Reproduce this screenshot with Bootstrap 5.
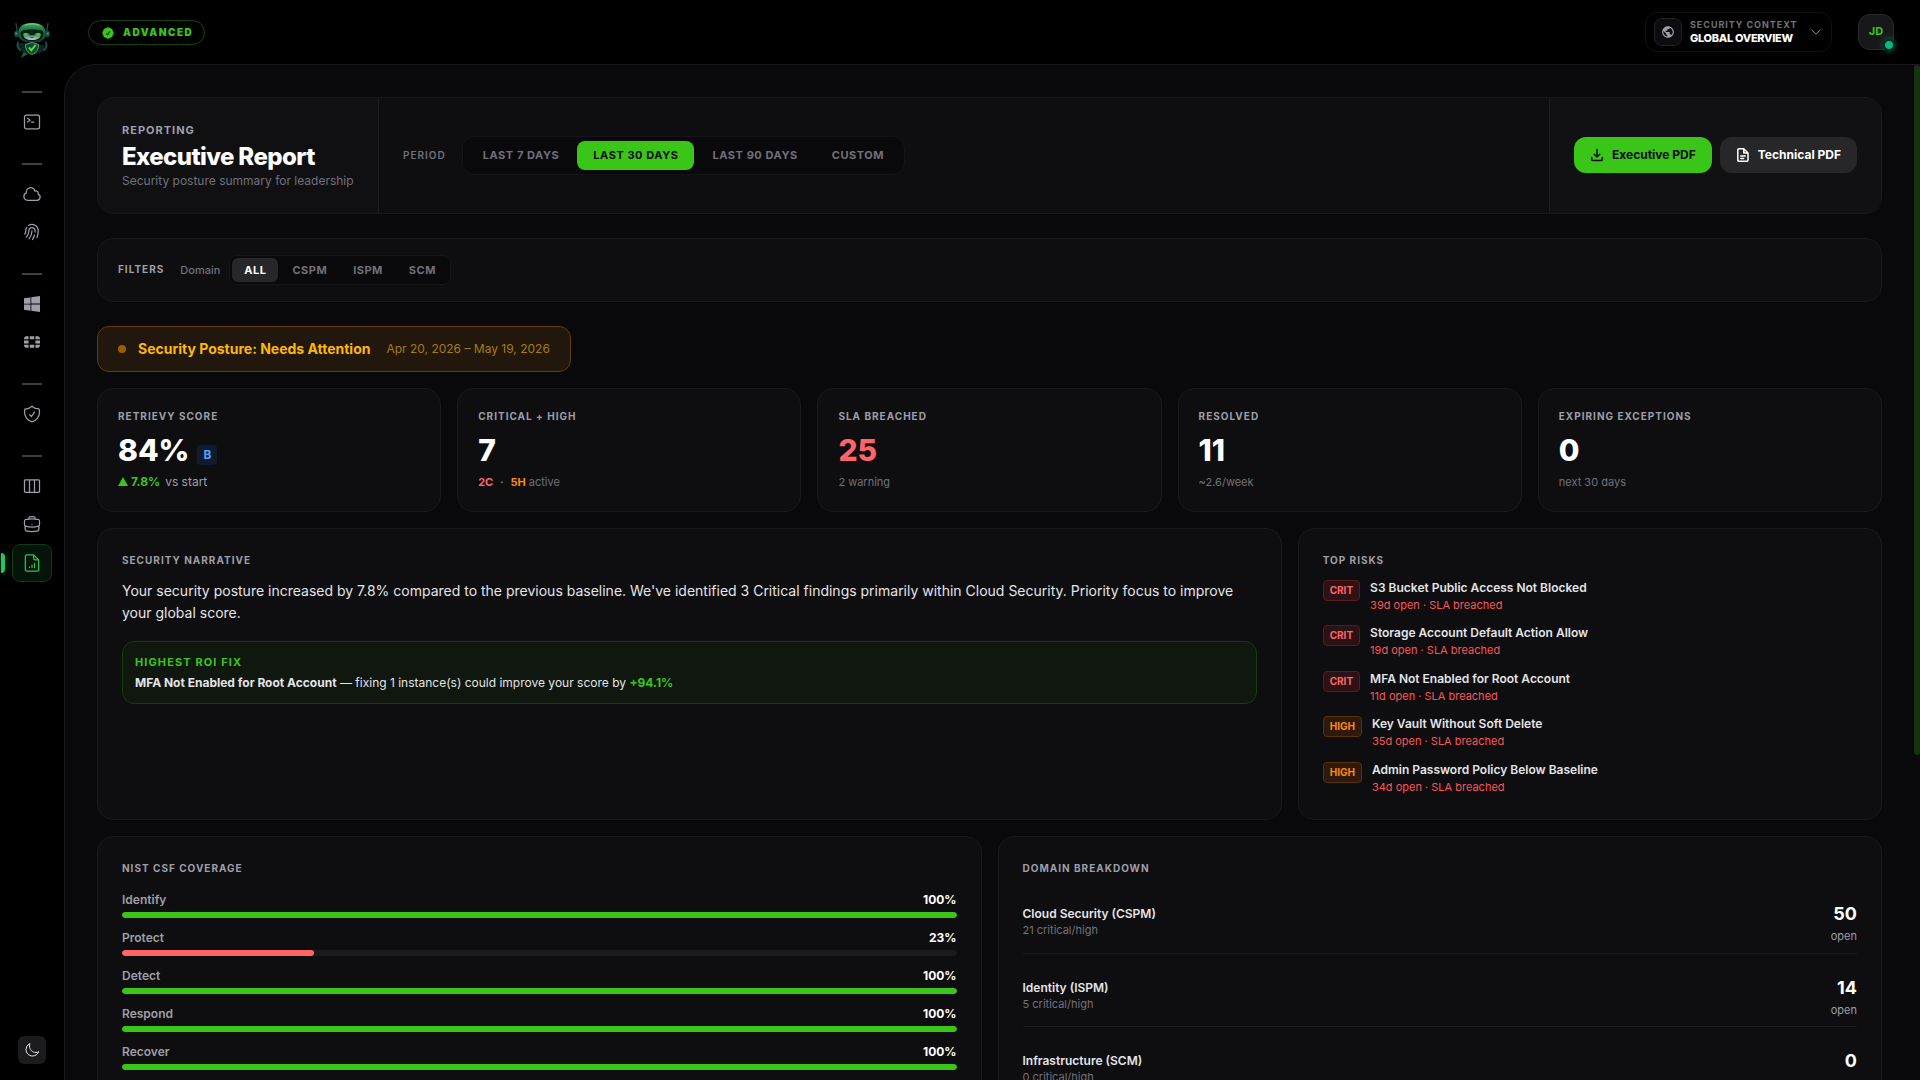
<!DOCTYPE html>
<html lang="en" data-bs-theme="dark">
<head>
  <meta charset="UTF-8" />
  <title>Executive Report</title>
  <meta name="viewport" content="width=device-width, initial-scale=1">
  <!-- Bootstrap 5 CDN -->
  <link href="https://cdn.jsdelivr.net/npm/bootstrap@5.3.3/dist/css/bootstrap.min.css" rel="stylesheet">

  <style>
    :root {
      --green: #3ac618;
      --line: #19191c;
      --panel: #0e0e10;
      --muted: #9f9fa9;
      --dim: #71717b;
    }
    body {
      font-family: Inter, "Liberation Sans", sans-serif;
      font-size: 12px;
      line-height: 16px;
      background: #000;
      color: #e4e4e7;
    }
    svg { display: block; flex: none; }
    .ico { fill: none; stroke: currentColor; stroke-width: 1.5; stroke-linecap: round; stroke-linejoin: round; }

    /* sidebar */
    .side { width: 64px; color: var(--muted); }
    .side-logo { margin-top: 20px; width: 40px; height: 40px; }
    .side-sep { width: 20px; height: 2px; background: #3f3f46; margin: 22px 0 10px; }
    .side-logo + .side-sep { margin-top: 31px; }
    .side-item { width: 40px; height: 38px; border-radius: 8px; border: 1px solid transparent; }
    .side-item.on { margin-top: 1px; background: #04140a; border-color: #0c3a1c; color: #22c55e; position: relative; }
    .side-item.on::before {
      content: ""; position: absolute; left: -12px; top: 8px; width: 4px; height: 20px;
      background: #22c55e; border-radius: 0 4px 4px 0; box-shadow: 0 0 10px rgba(34,197,94,.5);
    }
    .theme-btn { width: 28px; height: 28px; border-radius: 6px; background: #1b1b1d; color: #e4e4e7; margin-bottom: 16px; }

    /* top bar */
    .topbar { height: 64px; padding: 0 26px 0 24px; }
    .plan { width: 117px; height: 25px; margin-top: 1px; padding-left: 12px; gap: 8px; border: 1px solid #13450a; color: var(--green); font-size: 10px; font-weight: 900; letter-spacing: 1.5px; }
    .plan span { padding-bottom: 1px; }
    .ctx { width: 187px; height: 40px; padding: 0 8px 1px; border: 1px solid #121214; border-radius: 12px; }
    .ctx-ico { width: 28px; height: 28px; border: 1px solid #222225; border-radius: 8px; background: #0c0c0e; color: var(--muted); }
    .ctx-label { font-size: 9px; line-height: 13px; font-weight: 700; letter-spacing: .96px; color: var(--dim); }
    .ctx-name { font-size: 11px; line-height: 15px; font-weight: 800; letter-spacing: -.3px; color: #fff; }
    .avatar { width: 36px; height: 36px; margin-left: 26px; padding-bottom: 2px; border: 1px solid #2b2b2e; border-radius: 12px; background: #18181b; color: var(--green); font-size: 11px; font-weight: 700; position: relative; }
    .avatar-dot { position: absolute; right: -2px; bottom: -2px; width: 12px; height: 12px; border: 2px solid #06261d; border-radius: 50%; background: #00bc7d; box-shadow: 0 0 6px rgba(0,188,125,.5); }

    /* main area */
    .stage { min-width: 0; height: 1016px; border: 1px solid var(--line); border-width: 1px 0 0 1px; border-radius: 32px 0 0 0; background: #09090b; padding: 32px 38px 0 32px; position: relative; overflow: hidden; }
    .thumb { position: absolute; right: 0; top: 0; width: 6px; height: 690px; border-radius: 3px; background: #15330d; }
    .panel { background: var(--panel); border: 1px solid var(--line); border-radius: 16px; }
    .eyebrow { font-size: 10px; line-height: 15px; font-weight: 700; letter-spacing: 1px; color: var(--muted); text-transform: uppercase; }

    .hero { height: 116.6px; margin-bottom: 24px; overflow: hidden; }
    .hero-left { width: 281px; padding: 24px; background: #101012; border-right: 1px solid #1c1c1f; }
    .hero-left h1 { font-size: 24px; line-height: 28px; font-weight: 800; letter-spacing: -.6px; color: #fff; margin: 4px 0 2px; }
    .hero-tag { font-size: 11px; line-height: 16.5px; letter-spacing: 1px; }
    .hero-sub { color: var(--dim); }
    .hero-right { padding: 0 24px; gap: 8px; background: #111113; border-left: 1px solid #1c1c1f; }
    .act { height: 36px; padding: 0 16px; gap: 8px; border: 0; border-radius: 12px; font-size: 12px; font-weight: 700; }
    .act .ico { stroke-width: 1.5; }
    .act-main, .act-main:hover { background: var(--green); color: #09090b; }
    .act-alt, .act-alt:hover { background: #27272a; color: #fff; }

    .period { font-weight: 600; color: var(--dim); margin-right: 16px; }
    .seg { border: 1px solid #151517; background: #09090b; gap: 2px; }
    .seg button { border: 0; background: none; color: var(--dim); font-weight: 700; }
    .seg-lg { height: 39px; padding: 4px; border-radius: 12px; }
    .seg-lg button { font-size: 11px; letter-spacing: .55px; padding: 0 16px 1px; border-radius: 8px; }
    .seg-lg button.on { background: var(--green); color: #09090b; }
    .seg-sm { height: 30px; padding: 2px; border-radius: 8px; }
    .seg-sm button { font-size: 11px; letter-spacing: .5px; padding: 0 12px; border-radius: 6px; }
    .seg-sm button.on { background: #27272a; color: #fff; }

    .filters { height: 64px; padding: 0 20px; margin-bottom: 24px; }
    .filters-key { margin: 0 9px 0 16px; }
    .posture { width: 474px; height: 46px; padding: 0 20px; margin-bottom: 16px; border: 1px solid #653d06; border-radius: 12px; background: #21170c; color: #ffb900; }
    .posture-dot { width: 8px; height: 8px; border-radius: 50%; background: #9a5f05; }
    .posture-name { font-size: 14px; margin-left: 12px; }
    .posture-date { margin-left: 16px; color: #a97c08; }

    .grid { display: grid; gap: 16px; margin-bottom: 16px; }
    .grid-kpi { grid-template-columns: repeat(5, 1fr); }
    .grid-mid { grid-template-columns: repeat(3, 1fr); }
    .grid-half { grid-template-columns: repeat(2, 1fr); }
    .span-2 { grid-column: span 2; }

    .kpi { height: 124px; padding: 20.5px 20px 0; }
    .kpi-val { font-size: 30px; line-height: 36px; font-weight: 800; color: #fff; margin: 7.5px 0 6px; }
    .grade { width: 20px; height: 20px; border-radius: 4px; background: #101b2c; color: #51a2ff; font-size: 12px; font-weight: 700; margin: 11px 0 0 8px; }
    .kpi-sub { font-size: 11px; color: var(--dim); }
    .trend { margin-left: 3px; }
    .vs { margin-left: 5px; color: var(--muted); }
    .mid { margin: 0 7px; color: var(--muted); }
    .t-green { color: var(--green); }
    .t-red { color: #ff6467; }
    .t-orange { color: #ff8904; }

    .block { padding: 24px; }
    .story { font-size: 14px; line-height: 22.75px; margin: 12px 0 16px; color: #e4e4e7; }
    .roi { height: 63px; padding: 12px; border: 1px solid #163c0e; border-radius: 12px; background: #10170f; }
    .roi-head { font-size: 11px; line-height: 16.5px; font-weight: 700; letter-spacing: 1.1px; color: var(--green); margin-bottom: 4px; }

    .risks { margin-top: 12px; gap: 12px; }
    .risk { height: 33.5px; gap: 10px; }
    .sev { height: 21px; padding: 0 6px; font-size: 10px; line-height: 19px; font-weight: 700; border: 1px solid; border-radius: 4px; }
    .sev-crit { color: #ff6467; background: #2d1215; border-color: #5a1a1f; }
    .sev-high { color: #ff8904; background: #2d1a0c; border-color: #5a3109; }
    .risk-sub { font-size: 11px; line-height: 16.5px; color: #fb5558; margin-top: 1px; }

    .meter { height: 6px; margin: 4px 0 12px; border-radius: 3px; background: #1a1a1c; }
    .meter .progress-bar { border-radius: 3px; background: var(--green); }
    .meter .low { background: #ff6467; }
    .meter-name { font-weight: 600; color: var(--muted); }
    .meter-val { font-weight: 700; color: #fff; }

    .dom { padding: 8px 0; margin-bottom: 12px; border-bottom: 1px solid #1c1c1f; }
    .dom-num { font-size: 18px; line-height: 28px; font-weight: 700; color: #fff; }
    .dom-sub { font-size: 11px; line-height: 16.5px; color: var(--dim); }
    .dom-sub.open { color: var(--muted); }
  </style>
</head>
<body class="d-flex vh-100 overflow-hidden">

<nav class="side d-flex flex-column align-items-center flex-shrink-0">
  <!-- robot mascot -->
  <svg class="side-logo" viewBox="0 0 40 40">
    <defs>
      <linearGradient id="shell" x1="0" y1="0" x2="0" y2="1">
        <stop offset="0" stop-color="#4cb562"/><stop offset=".3" stop-color="#237a48"/><stop offset="1" stop-color="#0a3a2c"/>
      </linearGradient>
      <linearGradient id="face" x1="0" y1="0" x2="0" y2="1">
        <stop offset="0" stop-color="#1f5a42"/><stop offset="1" stop-color="#c2d8c8"/>
      </linearGradient>
    </defs>
    <path d="M4 3.500 5.200 11M36 3.500 34.800 11" stroke="#14503f" stroke-width="1.400" stroke-linecap="round"/>
    <path d="M8 23c-3 2-3 6 0 8l4 1-3 6 7-4h8c6-1 9-4 8-9z" fill="#08291f"/>
    <path d="M6 22.500q-1.500 4 2 7.500M34 22.500q1.500 4-2 7.500" stroke="#164f48" stroke-width="2" fill="none" stroke-linecap="round"/>
    <path d="m9 38 2.500-6 4 2z" fill="#14663a"/>
    <path d="M6 14C6 6 12 3 20 3s14 3 14 11c0 5-5 8.500-14 8.500S6 19 6 14z" fill="url(#shell)"/>
    <ellipse cx="4.600" cy="14" rx="2.400" ry="3.200" fill="#114a3b"/><ellipse cx="35.400" cy="14" rx="2.400" ry="3.200" fill="#114a3b"/>
    <circle cx="4.200" cy="13.600" r="1.100" fill="#3fa884"/><circle cx="35.800" cy="13.600" r="1.100" fill="#3fa884"/>
    <path d="M13 5.200q7-2.600 14 0" stroke="#8be08e" stroke-width="1.100" fill="none" opacity=".6"/>
    <path d="M8.500 13c0-2.500 4-3.500 11.500-3.500S31.500 10.500 31.500 13c0 5-3.500 8-11.500 8S8.500 18 8.500 13z" fill="#041a15"/>
    <path d="M11 14q9-2 18 0-.5 6-9 6t-9-6z" fill="url(#face)"/>
    <path d="M15.500 10.500h9l-2.200 4.700h-4.600z" fill="#06251c"/>
    <ellipse cx="13.800" cy="14.200" rx="2.500" ry="1.500" fill="#36c63c"/><ellipse cx="26.200" cy="14.200" rx="2.500" ry="1.500" fill="#36c63c"/>
    <path d="M18.500 17.500h3" stroke="#1c4a38" stroke-width=".8"/>
    <path d="m20 22.500 6.500 2c0 5-2 8-6.500 10-4.500-2-6.500-5-6.500-10z" fill="#0b4a2b" stroke="#6f9f8a" stroke-width=".9"/>
    <path d="m17 27.500 2.400 2.800 4.200-5.300" stroke="#4de63a" stroke-width="2" fill="none"/>
  </svg>
  <div class="side-sep"></div>
  <div class="side-item d-flex align-items-center justify-content-center">
    <svg class="ico" width="20" height="20" viewBox="0 0 24 24"><path d="m6.750 7.500 3 2.250-3 2.250m4.500 0h3m-9 8.250h13.500A2.250 2.250 0 0 0 21 18V6a2.250 2.250 0 0 0-2.250-2.250H5.250A2.250 2.250 0 0 0 3 6v12a2.250 2.250 0 0 0 2.250 2.250Z"/></svg>
  </div>
  <div class="side-sep"></div>
  <div class="side-item d-flex align-items-center justify-content-center">
    <svg class="ico" width="20" height="20" viewBox="0 0 24 24"><path d="M2.250 15a4.500 4.500 0 0 0 4.500 4.500H18a3.750 3.750 0 0 0 1.332-7.257 3 3 0 0 0-3.758-3.848 5.250 5.250 0 0 0-10.233 2.330A4.502 4.502 0 0 0 2.250 15Z"/></svg>
  </div>
  <div class="side-item d-flex align-items-center justify-content-center">
    <svg class="ico" width="20" height="20" viewBox="0 0 24 24"><path d="M7.864 4.243A7.500 7.500 0 0 1 19.500 10.500c0 2.920-.556 5.709-1.568 8.268M5.742 6.364A7.465 7.465 0 0 0 4.500 10.500a7.464 7.464 0 0 1-1.150 3.993m1.989 3.559A11.209 11.209 0 0 0 8.250 10.500a3.750 3.750 0 1 1 7.500 0c0 .527-.021 1.049-.064 1.565M12 10.500a14.940 14.940 0 0 1-3.600 9.750m6.633-4.596a18.666 18.666 0 0 1-2.485 5.330"/></svg>
  </div>
  <div class="side-sep"></div>
  <div class="side-item d-flex align-items-center justify-content-center">
    <svg width="16" height="16" viewBox="0 0 24 24" fill="currentColor"><path d="M0 3.449 9.750 2.100v9.451H0zM10.949 1.949 24 0v11.400H10.949zM0 12.600h9.750v9.451L0 20.699zM10.949 12.600H24V24l-13.051-1.801z"/></svg>
  </div>
  <div class="side-item d-flex align-items-center justify-content-center">
    <svg width="16" height="16" viewBox="0 0 24 24" fill="currentColor"><path d="M0 9.785h6.788v4.454H0zm8.666-6.330h6.668v4.453H8.666zm0 12.637h6.668v4.454H8.666zm8.522-6.307H24v4.454h-6.812zM2.792 3.455C1.372 3.814.265 5.404 0 7.425v.506h6.788V3.454zM0 16.091v.554c.24 1.926 1.276 3.466 2.624 3.900h4.188v-4.454zm24-8.184v-.506c-.265-1.998-1.372-3.587-2.792-3.972h-4.020v4.454H24zM21.376 20.570c1.324-.458 2.360-1.974 2.624-3.900v-.554h-6.812v4.454z"/></svg>
  </div>
  <div class="side-sep"></div>
  <div class="side-item d-flex align-items-center justify-content-center">
    <svg class="ico" width="20" height="20" viewBox="0 0 24 24"><path d="M9 12.750 11.250 15 15 9.750m-3-7.036A11.959 11.959 0 0 1 3.598 6 11.990 11.990 0 0 0 3 9.749c0 5.592 3.824 10.290 9 11.623 5.176-1.332 9-6.030 9-11.622 0-1.310-.21-2.571-.598-3.751h-.152c-3.196 0-6.100-1.248-8.250-3.285Z"/></svg>
  </div>
  <div class="side-sep"></div>
  <div class="side-item d-flex align-items-center justify-content-center">
    <svg class="ico" width="20" height="20" viewBox="0 0 24 24"><path d="M9 4.500v15m6-15v15m-10.875 0h15.750c.621 0 1.125-.504 1.125-1.125V5.625c0-.621-.504-1.125-1.125-1.125H4.125C3.504 4.500 3 5.004 3 5.625v12.750c0 .621.504 1.125 1.125 1.125Z"/></svg>
  </div>
  <div class="side-item d-flex align-items-center justify-content-center">
    <svg class="ico" width="20" height="20" viewBox="0 0 24 24"><path d="M20.250 14.150v4.250c0 1.094-.787 2.036-1.872 2.180-2.087.277-4.216.42-6.378.42s-4.291-.143-6.378-.42c-1.085-.144-1.872-1.086-1.872-2.180v-4.250m16.500 0a2.180 2.180 0 0 0 .75-1.661V8.706c0-1.081-.768-2.015-1.837-2.175a48.114 48.114 0 0 0-3.413-.387m4.500 8.006c-.194.165-.42.295-.673.38A23.978 23.978 0 0 1 12 15.750c-2.648 0-5.195-.429-7.577-1.220a2.016 2.016 0 0 1-.673-.38m0 0A2.180 2.180 0 0 1 3 12.489V8.706c0-1.081.768-2.015 1.837-2.175a48.111 48.111 0 0 1 3.413-.387m7.500 0V5.250A2.250 2.250 0 0 0 13.500 3h-3a2.250 2.250 0 0 0-2.250 2.250v.894m7.500 0a48.667 48.667 0 0 0-7.500 0M12 12.750h.008v.008H12v-.008Z"/></svg>
  </div>
  <div class="side-item on d-flex align-items-center justify-content-center">
    <svg class="ico" width="20" height="20" viewBox="0 0 24 24"><path d="M14 2.250H6.250A2.250 2.250 0 0 0 4 4.500v15a2.250 2.250 0 0 0 2.250 2.250h11.500A2.250 2.250 0 0 0 20 19.500V8.250zM14 2.250V6a2.250 2.250 0 0 0 2.250 2.250H20M9 17.500v-1M12 17.500v-3M15 17.500v-5"/></svg>
  </div>
  <div class="theme-btn d-flex align-items-center justify-content-center mt-auto">
    <svg class="ico" width="16" height="16" viewBox="0 0 24 24"><path d="M21.752 15.002A9.720 9.720 0 0 1 18 15.750c-5.385 0-9.750-4.365-9.750-9.750 0-1.330.266-2.597.748-3.752A9.753 9.753 0 0 0 3 11.250C3 16.635 7.365 21 12.750 21a9.753 9.753 0 0 0 9.002-5.998Z"/></svg>
  </div>
</nav>

<div class="flex-grow-1 overflow-hidden">
  <header class="topbar d-flex align-items-center">
    <div class="plan d-flex align-items-center rounded-pill me-auto">
      <svg width="14" height="14" viewBox="0 0 24 24" fill="currentColor"><path fill-rule="evenodd" d="M8.603 3.799A4.490 4.490 0 0 1 12 2.250c1.357 0 2.573.6 3.397 1.549a4.490 4.490 0 0 1 3.498 1.307 4.491 4.491 0 0 1 1.307 3.497A4.490 4.490 0 0 1 21.750 12a4.490 4.490 0 0 1-1.549 3.397 4.491 4.491 0 0 1-1.307 3.497 4.491 4.491 0 0 1-3.497 1.307A4.490 4.490 0 0 1 12 21.750a4.490 4.490 0 0 1-3.397-1.549 4.490 4.490 0 0 1-3.498-1.306 4.491 4.491 0 0 1-1.307-3.498A4.490 4.490 0 0 1 2.250 12c0-1.357.6-2.573 1.549-3.397a4.490 4.490 0 0 1 1.307-3.497 4.490 4.490 0 0 1 3.497-1.307Zm7.007 6.387a.75.75 0 1 0-1.220-.872l-3.236 4.530L9.530 12.220a.75.75 0 0 0-1.060 1.060l2.250 2.250a.75.75 0 0 0 1.140-.094l3.750-5.250Z"/></svg>
      <span>ADVANCED</span>
    </div>
    <div class="ctx d-flex align-items-center">
      <div class="ctx-ico d-flex align-items-center justify-content-center">
        <svg width="14" height="14" viewBox="0 0 24 24" fill="currentColor"><path d="M12 2C6.480 2 2 6.480 2 12s4.480 10 10 10 10-4.480 10-10S17.520 2 12 2zm-1 17.930c-3.950-.49-7-3.850-7-7.930 0-.62.08-1.210.21-1.790L9 15v1c0 1.100.9 2 2 2v1.930zm6.900-2.540c-.26-.81-1-1.390-1.900-1.390h-1v-3c0-.55-.45-1-1-1H8v-2h2c.55 0 1-.45 1-1V7h2c1.100 0 2-.9 2-2v-.41c2.930 1.190 5 4.060 5 7.410 0 2.080-.8 3.970-2.100 5.390z"/></svg>
      </div>
      <div class="ms-2 me-auto text-nowrap">
        <div class="ctx-label">SECURITY CONTEXT</div>
        <div class="ctx-name">GLOBAL OVERVIEW</div>
      </div>
      <svg class="ico" width="14" height="14" viewBox="0 0 24 24" color="#9f9fa9"><path d="m19.500 8.250-7.500 7.500-7.500-7.500"/></svg>
    </div>
    <div class="avatar d-flex align-items-center justify-content-center">JD<span class="avatar-dot"></span></div>
  </header>

  <main class="stage">
    <div class="thumb"></div>

    <section class="panel hero d-flex">
      <div class="hero-left text-nowrap">
        <div class="eyebrow hero-tag">Reporting</div>
        <h1>Executive Report</h1>
        <div class="hero-sub">Security posture summary for leadership</div>
      </div>
      <div class="d-flex align-items-center flex-grow-1 px-4">
        <span class="eyebrow period">Period</span>
        <div class="seg seg-lg d-flex">
          <button>LAST 7 DAYS</button>
          <button class="on">LAST 30 DAYS</button>
          <button>LAST 90 DAYS</button>
          <button>CUSTOM</button>
        </div>
      </div>
      <div class="hero-right d-flex align-items-center">
        <button class="btn act act-main d-flex align-items-center">
          <svg class="ico" width="14" height="14" viewBox="0 0 14 14"><path d="M1.700 9.500v1.800a1.100 1.100 0 0 0 1.100 1.100h8.400a1.100 1.100 0 0 0 1.100-1.100V9.500M7 1.500V9M4.200 6.300 7 9l2.800-2.700"/></svg>
          Executive PDF
        </button>
        <button class="btn act act-alt d-flex align-items-center">
          <svg class="ico" width="14" height="14" viewBox="0 0 14 14"><path d="M7.800.8H3a1.200 1.200 0 0 0-1.200 1.200v10A1.200 1.200 0 0 0 3 13.200h7.800A1.200 1.200 0 0 0 12 12V5zM7.800.8V5H12M4.700 8h4.600M4.700 10.500h3"/></svg>
          Technical PDF
        </button>
      </div>
    </section>

    <section class="panel filters d-flex align-items-center">
      <span class="eyebrow">Filters</span>
      <span class="kpi-sub fw-medium filters-key">Domain</span>
      <div class="seg seg-sm d-flex">
        <button class="on">ALL</button>
        <button>CSPM</button>
        <button>ISPM</button>
        <button>SCM</button>
      </div>
    </section>

    <section class="posture d-flex align-items-center text-nowrap">
      <span class="posture-dot"></span>
      <span class="posture-name fw-bold">Security Posture: Needs Attention</span>
      <span class="posture-date">Apr 20, 2026 – May 19, 2026</span>
    </section>

    <section class="grid grid-kpi">
      <div class="panel kpi">
        <div class="eyebrow">Retrievy Score</div>
        <div class="kpi-val d-flex align-items-center">84%<span class="grade d-flex align-items-center justify-content-center">B</span></div>
        <div class="d-flex align-items-center">
          <svg width="10" height="9" viewBox="0 0 10 9"><path d="M5 0l5 9H0z" fill="#3ac618"/></svg>
          <span class="t-green fw-bold trend">7.8%</span><span class="vs">vs start</span>
        </div>
      </div>
      <div class="panel kpi">
        <div class="eyebrow">Critical + High</div>
        <div class="kpi-val">7</div>
        <div class="kpi-sub"><span class="t-red fw-bold">2C</span><span class="mid">·</span><span class="t-orange fw-bold">5H</span> active</div>
      </div>
      <div class="panel kpi">
        <div class="eyebrow">SLA Breached</div>
        <div class="kpi-val t-red">25</div>
        <div class="kpi-sub">2 warning</div>
      </div>
      <div class="panel kpi">
        <div class="eyebrow">Resolved</div>
        <div class="kpi-val">11</div>
        <div class="kpi-sub">~2.6/week</div>
      </div>
      <div class="panel kpi">
        <div class="eyebrow">Expiring Exceptions</div>
        <div class="kpi-val">0</div>
        <div class="kpi-sub">next 30 days</div>
      </div>
    </section>

    <section class="grid grid-mid">
      <div class="panel block span-2">
        <div class="eyebrow">Security Narrative</div>
        <p class="story">Your security posture increased by 7.8% compared to the previous baseline. We've identified 3 Critical findings primarily within Cloud Security. Priority focus to improve your global score.</p>
        <div class="roi">
          <div class="roi-head">HIGHEST ROI FIX</div>
          <div><span class="fw-bold">MFA Not Enabled for Root Account</span> — fixing 1 instance(s) could improve your score by <span class="t-green fw-bold">+94.1%</span></div>
        </div>
      </div>
      <div class="panel block">
        <div class="eyebrow">Top Risks</div>
        <div class="risks d-flex flex-column">
          <div class="risk d-flex align-items-start">
            <span class="sev sev-crit">CRIT</span>
            <div><div class="fw-semibold">S3 Bucket Public Access Not Blocked</div><div class="risk-sub">39d open · SLA breached</div></div>
          </div>
          <div class="risk d-flex align-items-start">
            <span class="sev sev-crit">CRIT</span>
            <div><div class="fw-semibold">Storage Account Default Action Allow</div><div class="risk-sub">19d open · SLA breached</div></div>
          </div>
          <div class="risk d-flex align-items-start">
            <span class="sev sev-crit">CRIT</span>
            <div><div class="fw-semibold">MFA Not Enabled for Root Account</div><div class="risk-sub">11d open · SLA breached</div></div>
          </div>
          <div class="risk d-flex align-items-start">
            <span class="sev sev-high">HIGH</span>
            <div><div class="fw-semibold">Key Vault Without Soft Delete</div><div class="risk-sub">35d open · SLA breached</div></div>
          </div>
          <div class="risk d-flex align-items-start">
            <span class="sev sev-high">HIGH</span>
            <div><div class="fw-semibold">Admin Password Policy Below Baseline</div><div class="risk-sub">34d open · SLA breached</div></div>
          </div>
        </div>
      </div>
    </section>

    <section class="grid grid-half">
      <div class="panel block">
        <div class="eyebrow mb-3">NIST CSF Coverage</div>
        <div id="coverage"></div>
      </div>
      <div class="panel block">
        <div class="eyebrow mb-3">Domain Breakdown</div>
        <div id="domains"></div>
      </div>
    </section>
  </main>
</div>

<script src="https://cdn.jsdelivr.net/npm/bootstrap@5.3.3/dist/js/bootstrap.bundle.min.js"></script>
<script>
  const coverage = [["Identify", 100], ["Protect", 23], ["Detect", 100], ["Respond", 100], ["Recover", 100]];
  const domains = [["Cloud Security (CSPM)", 21, 50], ["Identity (ISPM)", 5, 14], ["Infrastructure (SCM)", 0, 0]];

  document.getElementById("coverage").innerHTML = coverage.map(([name, pct]) => `
    <div class="d-flex justify-content-between"><span class="meter-name">${name}</span><span class="meter-val">${pct}%</span></div>
    <div class="progress meter"><div class="progress-bar ${pct < 50 ? "low" : ""}" style="width: ${pct}%"></div></div>`).join("");

  document.getElementById("domains").innerHTML = domains.map(([name, crit, open]) => `
    <div class="dom d-flex align-items-center justify-content-between">
      <div><div class="fw-semibold">${name}</div><div class="dom-sub">${crit} critical/high</div></div>
      <div class="text-end"><div class="dom-num">${open}</div><div class="dom-sub open">open</div></div>
    </div>`).join("");
</script>

</body>
</html>
